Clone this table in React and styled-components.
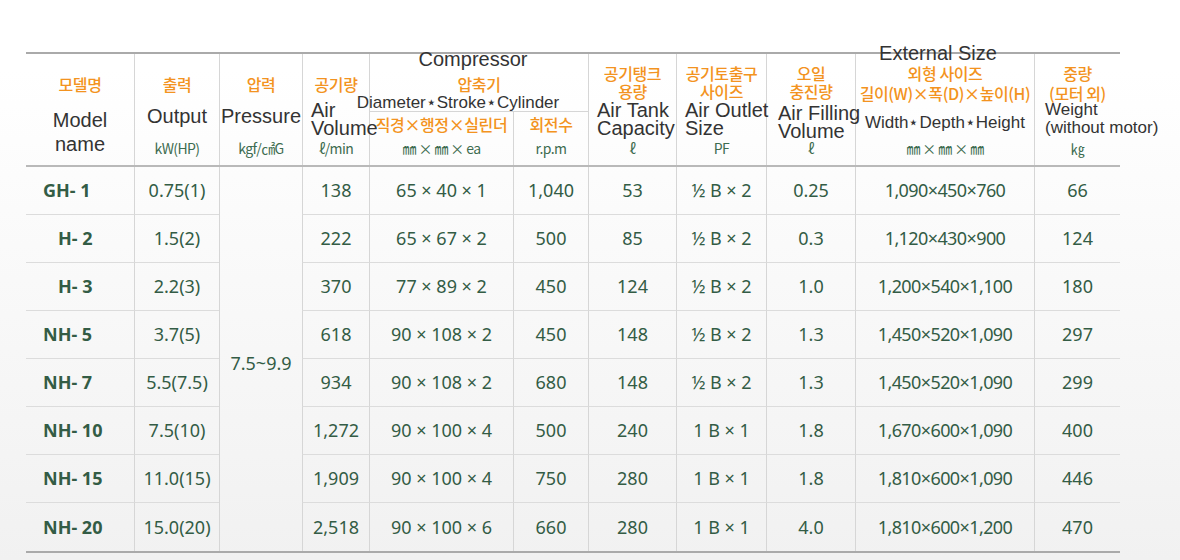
import React from "react";
import styled, { createGlobalStyle } from "styled-components";

const Global = createGlobalStyle`
  html, body { margin: 0; padding: 0; }
  body {
    background: linear-gradient(to bottom, #ffffff 0px, #ffffff 70px, #f1f1f1 560px);
    font-family: "Noto Sans", "Noto Sans CJK KR", sans-serif;
  }
`;

const COLS = "108px 85px 83px 67px 144px 75px 88px 90px 89px 179px 86px";
const ORANGE = "#f39320";
const GREEN = "#335c45";
const UNIT = "#3d6c50";
const LINE = "#d6d6d6";

const Page = styled.div`
  min-height: 560px;
  padding: 52px 0 0 26px;
  box-sizing: border-box;
`;

const Table = styled.div`
  width: 1094px;
  border-top: 2px solid #aaaaaa;
  border-bottom: 2px solid #aaaaaa;
`;

const Head = styled.div`
  display: grid;
  grid-template-columns: ${COLS};
  grid-template-rows: 58px 53px;
  border-bottom: 2px solid #b9b9b9;
`;

const HeadCell = styled.div`
  grid-column: ${(p) => p.$col};
  grid-row: ${(p) => p.$row || "1 / span 2"};
  display: flex;
  flex-direction: column;
  align-items: center;
  box-sizing: border-box;
  padding-top: ${(p) => p.$pt || 0}px;
  padding-bottom: 9px;
  border-left: ${(p) => (p.$first ? "none" : `1px solid ${LINE}`)};
  border-bottom: ${(p) => (p.$divide ? `1px solid ${LINE}` : "none")};
  white-space: nowrap;
  min-width: 0;
`;

const Ko = styled.div`
  font-family: "Noto Sans CJK KR", sans-serif;
  font-size: 16px;
  font-weight: 500;
  color: ${ORANGE};
  line-height: ${(p) => p.$lh || 18}px;
  margin-top: ${(p) => p.$mt || 0}px;
  text-align: center;
  letter-spacing: -0.4px;
`;

const En = styled.div`
  font-family: "Liberation Sans", sans-serif;
  font-size: ${(p) => p.$fs || 20}px;
  color: #333333;
  line-height: ${(p) => p.$lh || 18}px;
  margin-top: ${(p) => p.$mt || 0}px;
  margin-right: ${(p) => p.$shift || 0}px;
  align-self: ${(p) => (p.$left ? "flex-start" : "center")};
  padding-left: ${(p) => p.$pl || 0}px;
  text-align: ${(p) => (p.$left ? "left" : "center")};
  position: relative;
`;

const Unit = styled.div`
  margin-top: auto;
  font-family: "Noto Sans CJK KR", sans-serif;
  font-size: 14px;
  color: ${UNIT};
  line-height: 16px;
  letter-spacing: -0.6px;
`;

const Body = styled.div`
  display: grid;
  grid-template-columns: ${COLS};
  grid-auto-rows: 48px;
`;

const Cell = styled.div`
  box-sizing: border-box;
  display: flex;
  align-items: center;
  justify-content: ${(p) => (p.$model ? "flex-start" : "center")};
  padding-left: ${(p) => (p.$model ? (p.$indent ? 32 : 17) : 0)}px;
  padding-bottom: 1px;
  border-left: ${(p) => (p.$first ? "none" : `1px solid ${LINE}`)};
  border-bottom: ${(p) => (p.$last ? "none" : "1px solid #dcdcdc")};
  font-family: "Noto Sans", sans-serif;
  font-size: 18px;
  font-weight: ${(p) => (p.$model ? 700 : 400)};
  color: ${GREEN};
  white-space: nowrap;
  letter-spacing: ${(p) => (p.$tight ? "-0.6px" : "0")};
`;

const MergedCell = styled.div`
  grid-column: 3;
  grid-row: 1 / span 8;
  display: flex;
  align-items: center;
  justify-content: center;
  padding-top: 8px;
  box-sizing: border-box;
  border-left: 1px solid ${LINE};
  font-family: "Noto Sans", sans-serif;
  font-size: 18px;
  color: ${GREEN};
`;

const rows = [
  ["GH- 1", false, "0.75(1)", "138", "65 × 40 × 1", "1,040", "53", "½ B × 2", "0.25", "1,090×450×760", "66"],
  ["H- 2", true, "1.5(2)", "222", "65 × 67 × 2", "500", "85", "½ B × 2", "0.3", "1,120×430×900", "124"],
  ["H- 3", true, "2.2(3)", "370", "77 × 89 × 2", "450", "124", "½ B × 2", "1.0", "1,200×540×1,100", "180"],
  ["NH- 5", false, "3.7(5)", "618", "90 × 108 × 2", "450", "148", "½ B × 2", "1.3", "1,450×520×1,090", "297"],
  ["NH- 7", false, "5.5(7.5)", "934", "90 × 108 × 2", "680", "148", "½ B × 2", "1.3", "1,450×520×1,090", "299"],
  ["NH- 10", false, "7.5(10)", "1,272", "90 × 100 × 4", "500", "240", "1 B × 1", "1.8", "1,670×600×1,090", "400"],
  ["NH- 15", false, "11.0(15)", "1,909", "90 × 100 × 4", "750", "280", "1 B × 1", "1.8", "1,810×600×1,090", "446"],
  ["NH- 20", false, "15.0(20)", "2,518", "90 × 100 × 6", "660", "280", "1 B × 1", "4.0", "1,810×600×1,200", "470"],
];

export default function App() {
  return (
    <>
      <Global />
      <Page>
        <Table>
          <Head>
            <HeadCell $col={1} $first $pt={21}>
              <Ko>모델명</Ko>
              <En $lh={24} $mt={15}>Model<br />name</En>
            </HeadCell>
            <HeadCell $col={2} $pt={21}>
              <Ko>출력</Ko>
              <En $lh={24} $mt={11}>Output</En>
              <Unit>kW(HP)</Unit>
            </HeadCell>
            <HeadCell $col={3} $pt={21}>
              <Ko>압력</Ko>
              <En $lh={24} $mt={11}>Pressure</En>
              <Unit>kgf/㎠G</Unit>
            </HeadCell>
            <HeadCell $col={4} $pt={21}>
              <Ko>공기량</Ko>
              <En $mt={8} $left $pl={8}>Air<br />Volume</En>
              <Unit>ℓ/min</Unit>
            </HeadCell>
            <HeadCell $col={"5 / span 2"} $row={"1"} $divide $pt={0}>
              <En $lh={20} $mt={-5} $shift={12}>Compressor</En>
              <Ko $mt={6}>압축기</Ko>
              <En $fs={17} $mt={1} $shift={42}>Diameter⋆Stroke⋆Cylinder</En>
            </HeadCell>
            <HeadCell $col={5} $row={"2"} $pt={3}>
              <Ko>직경×행정×실린더</Ko>
              <Unit>㎜ × ㎜ × ea</Unit>
            </HeadCell>
            <HeadCell $col={6} $row={"2"} $pt={3}>
              <Ko>회전수</Ko>
              <Unit>r.p.m</Unit>
            </HeadCell>
            <HeadCell $col={7} $pt={10}>
              <Ko>공기탱크<br />용량</Ko>
              <En $mt={1} $left $pl={8}>Air Tank<br />Capacity</En>
              <Unit>ℓ</Unit>
            </HeadCell>
            <HeadCell $col={8} $pt={10}>
              <Ko>공기토출구<br />사이즈</Ko>
              <En $mt={1} $left $pl={8}>Air Outlet<br />Size</En>
              <Unit>PF</Unit>
            </HeadCell>
            <HeadCell $col={9} $pt={10}>
              <Ko>오일<br />충진량</Ko>
              <En $mt={4} $left $pl={11}>Air Filling<br />Volume</En>
              <Unit>ℓ</Unit>
            </HeadCell>
            <HeadCell $col={10} $pt={0}>
              <En $lh={20} $mt={-11} $shift={14}>External Size</En>
              <Ko $lh={20}>외형 사이즈<br />길이(W)×폭(D)×높이(H)</Ko>
              <En $fs={17} $lh={20} $mt={10}>Width⋆Depth⋆Height</En>
              <Unit>㎜ × ㎜ × ㎜</Unit>
            </HeadCell>
            <HeadCell $col={11} $pt={9}>
              <Ko $lh={20}>중량<br />(모터 외)</Ko>
              <En $fs={17} $mt={-2} $left $pl={10}>Weight<br />(without motor)</En>
              <Unit>㎏</Unit>
            </HeadCell>
          </Head>
          <Body>
            <MergedCell>7.5~9.9</MergedCell>
            {rows.map((r, i) => {
              const last = i === rows.length - 1;
              const [model, indent, out, vol, dim, rpm, tank, outlet, oil, ext, wt] = r;
              return (
                <React.Fragment key={model}>
                  <Cell $first $model $indent={indent} $last={last}>{model}</Cell>
                  <Cell $last={last}>{out}</Cell>
                  <Cell $last={last}>{vol}</Cell>
                  <Cell $last={last}>{dim}</Cell>
                  <Cell $last={last}>{rpm}</Cell>
                  <Cell $last={last}>{tank}</Cell>
                  <Cell $last={last}>{outlet}</Cell>
                  <Cell $last={last}>{oil}</Cell>
                  <Cell $last={last} $tight>{ext}</Cell>
                  <Cell $last={last}>{wt}</Cell>
                </React.Fragment>
              );
            })}
          </Body>
        </Table>
      </Page>
    </>
  );
}
